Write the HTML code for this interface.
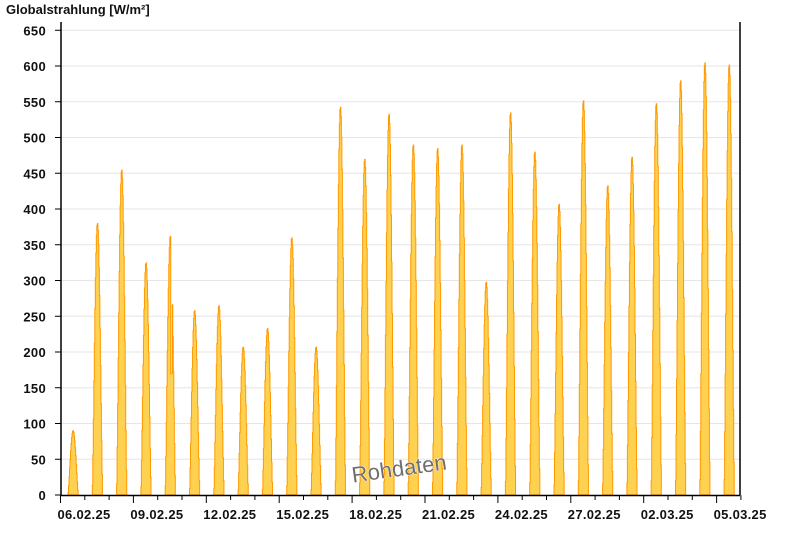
<!DOCTYPE html>
<html><head><meta charset="utf-8"><style>
html,body{margin:0;padding:0;background:#fff;width:800px;height:550px;overflow:hidden}
svg{display:block}
text{font-family:"Liberation Sans",Arial,sans-serif;font-weight:bold;fill:#111}
</style></head><body>
<svg id="s" width="800" height="550" viewBox="0 0 800 550" xmlns="http://www.w3.org/2000/svg">
<text x="6" y="14" font-size="13">Globalstrahlung [W/m²]</text>
<g id="grid"></g>
<g id="bars"></g>
<g id="axes"></g>
<text x="399" y="476" font-size="22" text-anchor="middle" transform="rotate(-8 399 468)" style="font-weight:normal;fill:#6e6e6e;stroke:#fff;stroke-width:0.8;paint-order:stroke">Rohdaten</text>
</svg>
<script>
var NS="http://www.w3.org/2000/svg";
function el(t,a,p){var e=document.createElementNS(NS,t);for(var k in a)e.setAttribute(k,a[k]);p.appendChild(e);return e;}
var g=document.getElementById('grid'),ax=document.getElementById('axes'),b=document.getElementById('bars');
var y0=495,s=0.715;
for(var v=0;v<=650;v+=50){var y=y0-v*s;
 if(v>0)el('line',{x1:61,x2:740,y1:y,y2:y,stroke:'#e6e6e6','stroke-width':1},g);
 el('line',{x1:55,x2:61,y1:y,y2:y,stroke:'#000','stroke-width':1},ax);
 var t=el('text',{x:46,y:y+5,'font-size':13,'text-anchor':'end','letter-spacing':'0.3'},ax);t.textContent=v;}
el('line',{x1:61,x2:61,y1:22,y2:495,stroke:'#000','stroke-width':1.5},ax);
el('line',{x1:740,x2:740,y1:22,y2:495,stroke:'#000','stroke-width':1.5},ax);
el('line',{x1:61,x2:740,y1:495.5,y2:495.5,stroke:'#000','stroke-width':1.5},ax);
var d=24.3,labels=['06.02.25','09.02.25','12.02.25','15.02.25','18.02.25','21.02.25','24.02.25','27.02.25','02.03.25','05.03.25'];
for(var k=0;k<=28;k++){var x=60.5+d*k;var maj=k%3==0;
 el('line',{x1:x,x2:x,y1:495,y2:maj?503:500,stroke:'#000','stroke-width':1},ax);
 if(maj&&k/3<labels.length){var t=el('text',{x:x-3,y:519,'font-size':13,'letter-spacing':'0.3'},ax);t.textContent=labels[k/3];}}
var pk=[90,380,455,325,362,258,265,207,233,360,207,543,470,533,490,485,490,298,535,480,407,552,433,473,548,580,605,602];
for(var i=0;i<28;i++){var bx=60.5+d*i,p=pk[i];var pts=[];
 var h0=7.4,h1=17.6;
 pts.push([bx+h0*d/24,y0]);
 for(var h=h0;h<h1;h+=0.5){var f=Math.sin(Math.PI*(h+0.25-h0)/(h1-h0));var v=p*Math.pow(Math.max(f,0),1.3);
   if(i==4&&h>12.5&&h<14)v=170;
   var y=y0-v*s;var xa=bx+h*d/24,xb=bx+(h+0.5)*d/24;pts.push([xa,y]);pts.push([xb,y]);}
 pts.push([bx+h1*d/24,y0]);
 el('polygon',{points:pts.map(function(q){return q[0].toFixed(2)+','+q[1].toFixed(2)}).join(' '),fill:'#ffd150',stroke:'#ff9900','stroke-width':1},b);}
</script>
</body></html>
